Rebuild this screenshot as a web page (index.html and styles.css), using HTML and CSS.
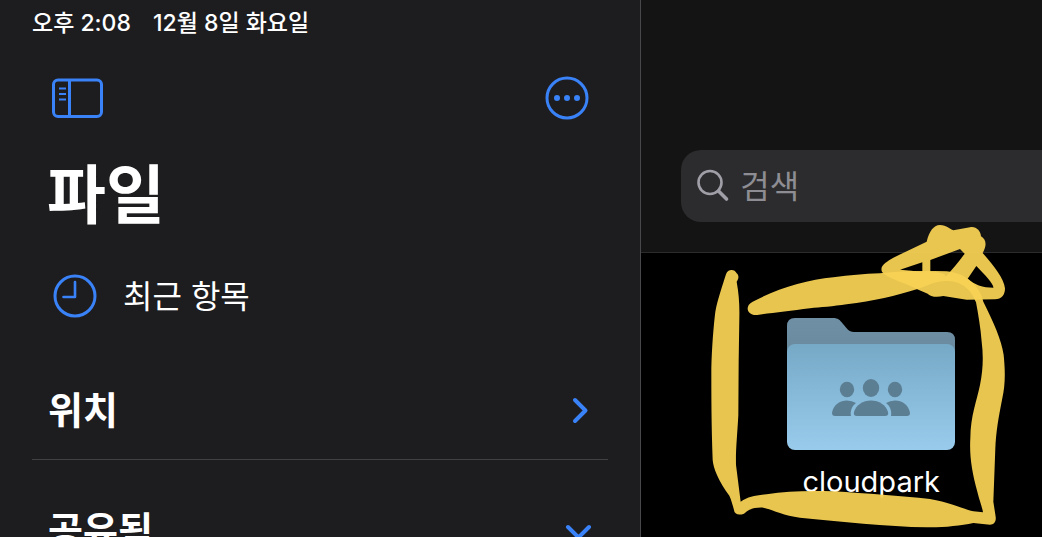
FILE: index.html
```html
<!DOCTYPE html>
<html lang="ko">
<head>
    <meta charset="UTF-8">
    <meta name="viewport" content="width=device-width, initial-scale=1.0">
    <title>파일</title>
    <link rel="stylesheet" href="styles.css">
</head>
<body>

    <div class="app">
        <!-- Sidebar -->
        <aside class="sidebar">
            <div class="status-bar">
                <span>오후 2:08</span>
                <span>12월 8일 화요일</span>
            </div>

            <div class="toolbar">
                <button type="button" class="icon-button" aria-label="사이드바">
                    <svg width="52" height="44" viewBox="0 0 52 44" fill="none" stroke="currentColor" stroke-width="3">
                        <rect x="2.5" y="4" width="48" height="36.500" rx="4.500"/>
                        <path d="M18.500 4v36"/>
                        <path d="M8 12.500h7M8 18h7M8 23.500h7" stroke-width="2"/>
                    </svg>
                </button>
                <button type="button" class="icon-button" aria-label="더 보기">
                    <svg width="44" height="44" viewBox="0 0 44 44">
                        <circle cx="22" cy="22" r="20" fill="none" stroke="currentColor" stroke-width="3"/>
                        <g fill="currentColor">
                            <circle cx="12" cy="22" r="3"/>
                            <circle cx="22" cy="22" r="3"/>
                            <circle cx="32" cy="22" r="3"/>
                        </g>
                    </svg>
                </button>
            </div>

            <h1>파일</h1>

            <a href="#" class="recent">
                <svg width="44" height="44" viewBox="0 0 44 44" fill="none" stroke="currentColor" stroke-width="3">
                    <circle cx="22" cy="22" r="20"/>
                    <path d="M22 8v15H10.500" stroke-width="2.600" stroke-linecap="round" stroke-linejoin="round"/>
                </svg>
                <span>최근 항목</span>
            </a>

            <nav class="groups">
                <button type="button" class="group">
                    <span>위치</span>
                    <svg width="20" height="28" viewBox="0 0 20 28" fill="none" stroke="currentColor" stroke-width="4" stroke-linecap="round" stroke-linejoin="round">
                        <path d="M3 4l10.500 10.500L3 25"/>
                    </svg>
                </button>
                <button type="button" class="group">
                    <span>공유됨</span>
                    <svg width="28" height="20" viewBox="0 0 28 20" fill="none" stroke="currentColor" stroke-width="4" stroke-linecap="round" stroke-linejoin="round">
                        <path d="M4 7l10.500 10.500L25 7"/>
                    </svg>
                </button>
            </nav>
        </aside>

        <!-- Folder contents -->
        <main class="content">
            <header class="search-header">
                <label class="search">
                    <svg width="34" height="34" viewBox="0 0 34 34" fill="none" stroke="currentColor">
                        <circle cx="14" cy="13.500" r="11.500" stroke-width="2.600"/>
                        <path d="M22.500 22l8 8" stroke-width="3.600" stroke-linecap="round"/>
                    </svg>
                    <input type="search" placeholder="검색" aria-label="검색">
                </label>
            </header>

            <div class="files">
                <a href="#" class="folder">
                    <svg width="168" height="132" viewBox="0 0 168 132">
                        <defs>
                            <linearGradient id="front" x1="0" y1="0" x2="0" y2="1">
                                <stop offset="0" stop-color="#76a9c6"/>
                                <stop offset="1" stop-color="#99cbec"/>
                            </linearGradient>
                            <linearGradient id="back" x1="0" y1="0" x2="0" y2="1">
                                <stop offset="0" stop-color="#6f8fa5"/>
                                <stop offset="1" stop-color="#698a9d"/>
                            </linearGradient>
                        </defs>
                        <path fill="url(#back)" d="M0 40V8Q0 0 8 0H46C51 0 53 2 56 6C60 10 61 14 67 14H160Q168 14 168 22V40Z"/>
                        <rect y="26" width="168" height="106" rx="8" fill="url(#front)"/>
                        <g fill="#5c7e93">
                            <ellipse cx="60" cy="71.500" rx="7.200" ry="7.700"/>
                            <ellipse cx="108" cy="71.500" rx="7.200" ry="7.700"/>
                            <ellipse cx="84" cy="70" rx="8.200" ry="9"/>
                            <path d="M48 98Q45 98 45 95C46 87 53 82.500 60 82.500Q65 82.500 69 85C65 88 63 93 64 98Z"/>
                            <path d="M120 98Q123 98 123 95C122 87 115 82.500 108 82.500Q103 82.500 99 85C103 88 105 93 104 98Z"/>
                            <path d="M70 98Q66 98 67 94C69 87 76 82.500 84 82.500S99 87 101 94Q102 98 98 98Z"/>
                        </g>
                    </svg>
                    <span class="folder-name">cloudpark</span>

                    <!-- Hand-drawn marker around the folder -->
                    <svg class="marker" width="342" height="322" viewBox="0 0 1026 966" fill="#f7d154">
                        <path opacity="0.940" d="M78 178C82 162 104 160 110 175C118 182 116 192 110 200C117 240 119 270 118 310L116 440L115 600C112 660 107 700 108 750L122 860C145 845 165 841 200 838C260 828 330 826 400 829C500 836 600 842 690 852C750 862 790 882 820 889L849 892C845 870 838 855 832 830C815 770 808 720 811 670C812 600 830 560 840 510C850 460 850 420 845 380C842 340 835 300 828 262C818 236 795 198 740 198C705 198 690 210 650 223C590 242 520 258 440 268C400 274 360 277 330 280C270 288 215 294 172 300C140 303 133 272 158 260C230 222 320 194 400 187C450 180 490 177 540 175C610 166 680 168 740 169C800 174 840 215 850 260C880 320 905 375 911 420C916 470 916 510 907 550C895 610 888 650 886 700L880 860L887 905C889 920 882 929 870 929L820 924C780 932 730 938 680 937C560 934 420 920 300 908C250 902 220 885 190 878C165 877 148 881 132 896C115 902 103 897 102 885C98 870 94 855 88 842C55 797 40 760 38 735C34 630 34 540 34 460C36 390 41 330 46 290C54 250 68 210 78 178Z"/>
                        <path opacity="0.940" fill-rule="evenodd" d="M546 170C538 152 560 140 580 128L680 80C688 50 700 30 720 30C740 31 750 42 760 46L810 37C828 33 842 48 843 64C858 73 862 90 848 114C880 150 912 190 915 220C915 240 905 253 885 253L800 254L730 243C710 248 690 245 683 236L650 222C610 200 560 190 546 170ZM600 164L667 142V172Q635 166 600 164ZM691 135L780 102L794 116C776 142 757 162 737 185Q736 171 691 171ZM829 153L803 191C820 208 850 218 880 218C882 208 855 180 829 153Z"/>
                    </svg>
                </a>
            </div>
        </main>
    </div>

</body>
</html>
```
FILE: styles.css
```css
* {
    box-sizing: border-box;
}

body {
    margin: 0;
    background-color: #000;
    color: #fff;
    font-family: Inter, "Noto Sans CJK KR", sans-serif;
    overflow: hidden;
}

button {
    padding: 0;
    border: none;
    background: none;
    font-family: inherit;
    cursor: pointer;
}

a {
    color: inherit;
    text-decoration: none;
}

svg {
    display: block;
    flex: none;
}

.app {
    display: grid;
    grid-template-columns: 8fr 5fr;
    height: 100vh;
}

/* Sidebar */
.sidebar {
    padding: 0 32px;
    background-color: #1d1d1f;
    border-right: 1px solid #48484b;
    overflow: hidden;
}

.status-bar {
    display: flex;
    gap: 22px;
    height: 48px;
    font-size: 23px;
    font-weight: 500;
    line-height: 46px;
}

.toolbar {
    display: flex;
    justify-content: space-between;
    padding: 28px 19px 0 19px;
}

.icon-button {
    color: #3a82f7;
}

h1 {
    margin: 28px 15px 0;
    font-size: 64px;
    font-weight: 700;
    line-height: 94px;
}

.recent {
    display: flex;
    align-items: center;
    gap: 26px;
    height: 64px;
    margin-top: 22px;
    padding-left: 21px;
    font-size: 32px;
}

.recent svg {
    color: #3a82f7;
}

.recent span {
    padding-bottom: 4px;
}

.groups {
    margin-top: 12px;
}

.group {
    display: flex;
    align-items: center;
    justify-content: space-between;
    width: 100%;
    height: 120px;
    padding: 20px 16px 0;
    border-bottom: 1px solid #414143;
    color: #fff;
    font-size: 38px;
    font-weight: 700;
}

.group span {
    padding-bottom: 4px;
}

.group svg {
    color: #3a82f7;
}

/* Folder contents */
.content {
    overflow: hidden;
}

.search-header {
    padding: 150px 0 30px 40px;
    background-color: #141414;
    border-bottom: 1px solid #2b2b2c;
}

.search {
    display: flex;
    align-items: center;
    gap: 10px;
    height: 72px;
    padding-left: 15px;
    border-radius: 20px 0 0 20px;
    background-color: #2c2c2e;
    color: #a09fa8;
}

.search input {
    flex: 1;
    min-width: 0;
    padding: 0;
    border: none;
    outline: none;
    background: none;
    color: #fff;
    font-family: inherit;
    font-size: 32px;
}

.search input::placeholder {
    color: #8d8d93;
}

.files {
    display: flex;
    padding: 65px 0 0 146px;
}

.folder {
    position: relative;
    width: 168px;
}

.folder-name {
    display: block;
    margin-top: 12px;
    font-size: 29px;
    line-height: 40px;
    text-align: center;
}

/* The marker lies over the folder and the search header */
.marker {
    position: absolute;
    top: -103px;
    left: -87px;
    pointer-events: none;
}
```
